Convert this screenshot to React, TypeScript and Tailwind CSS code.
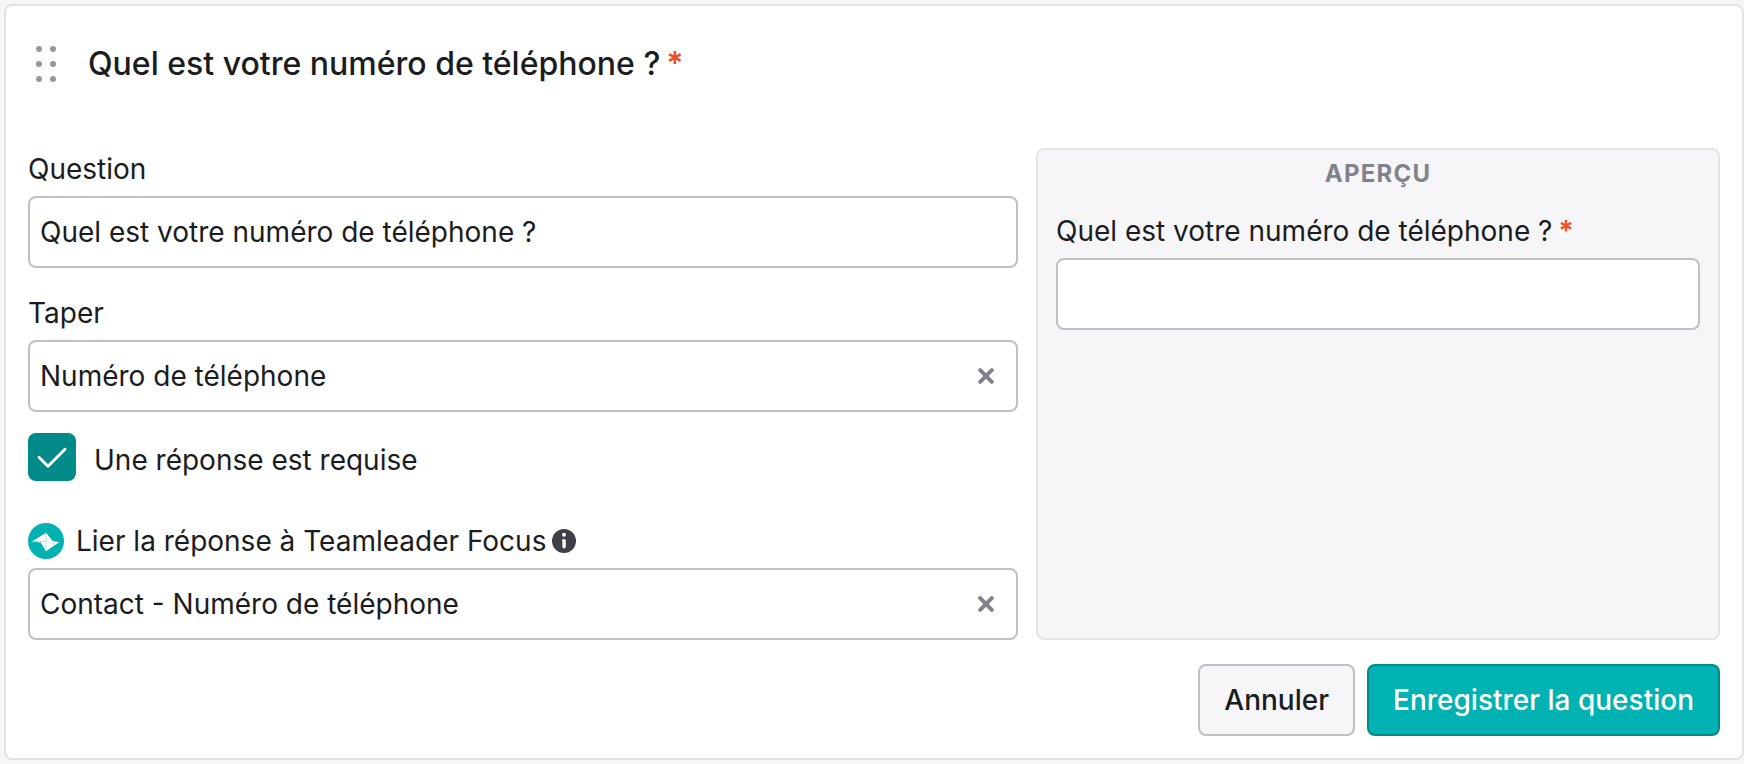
import { useState } from "react";

const fieldClass =
  "block h-[72px] w-full appearance-none rounded-lg border-2 border-[#c0c0c4] bg-white px-2.5 text-[28px] leading-9 text-[#1a1c20] outline-none focus:border-[#00b2b2]";

function DragHandle() {
  return (
    <svg width="20" height="36" viewBox="0 0 20 36" fill="#96969f" aria-hidden="true">
      {[3, 18, 33].map((y) => (
        <g key={y}>
          <circle cx="3" cy={y} r="3" />
          <circle cx="17" cy={y} r="3" />
        </g>
      ))}
    </svg>
  );
}

function FocusLogo() {
  return (
    <svg width="36" height="36" viewBox="0 0 36 36" className="shrink-0" aria-hidden="true">
      <circle cx="18" cy="18" r="18" fill="#00b2b2" />
      <path d="M18 9.8 24.8 18 31.6 19.2 26.2 22.6 18 28.2 12.7 19.6 4 18.4Z" fill="#fff" />
      <path d="M18 9.8v18.4M4 18.6H18M24.8 18 26.2 22.6" stroke="#8fdcdc" strokeWidth="0.8" fill="none" />
    </svg>
  );
}

function InfoIcon() {
  return (
    <svg width="24" height="24" viewBox="0 0 24 24" aria-hidden="true">
      <circle cx="12" cy="12" r="12" fill="#3f3f46" />
      <circle cx="12" cy="5.8" r="2" fill="#fff" />
      <path d="M10 11.2a1 1 0 0 1 1-1h1.8a1 1 0 0 1 1 1v6.6a1.7 1.7 0 0 1-3.4 0v-5.6a1 1 0 0 1-.4-1Z" fill="#fff" />
    </svg>
  );
}

function Required() {
  return <span className="ml-1.5 font-semibold text-[#f04e23]">*</span>;
}

function SelectField({ id, option, label }: { id: string; option: string; label: string }) {
  const [value, setValue] = useState(option);
  return (
    <div className="relative">
      <select id={id} value={value} onChange={(e) => setValue(e.target.value)} className={fieldClass}>
        <option value=""></option>
        <option value={option}>{option}</option>
      </select>
      <button
        type="button"
        aria-label={label}
        onClick={() => setValue("")}
        className="absolute inset-y-0 right-4 flex w-8 items-center justify-center"
      >
        <svg width="16" height="16" viewBox="0 0 16 16" aria-hidden="true">
          <path d="M2.2 2.2 13.8 13.8M13.8 2.2 2.2 13.8" stroke="#82828c" strokeWidth="4" strokeLinecap="round" />
        </svg>
      </button>
    </div>
  );
}

export default function App() {
  const [question, setQuestion] = useState("Quel est votre numéro de téléphone ?");
  const [required, setRequired] = useState(true);

  return (
    <main className="min-h-screen bg-[#f6f6f9] pt-1 pb-1 pl-1 font-['Inter','Liberation_Sans',sans-serif] text-[28px] leading-9 text-[#1a1c20]">
      <form
        onSubmit={(e) => e.preventDefault()}
        className="rounded-lg border-2 border-[#e4e4e6] bg-white px-[22px] pt-9 pb-[22px]"
      >
        <header className="flex items-center pl-2">
          <DragHandle />
          <h1 className="ml-8 text-[32px] leading-[44px] font-medium">
            {question}
            {required && <Required />}
          </h1>
        </header>

        <div className="mt-[62px] grid grid-cols-[55fr_38fr] gap-[18px]">
          <div>
            <div className="pt-[3px]">
              <label htmlFor="question" className="mb-[9px] block">
                Question
              </label>
              <input
                id="question"
                type="text"
                value={question}
                onChange={(e) => setQuestion(e.target.value)}
                className={fieldClass}
              />
            </div>

            <div className="mt-[27px]">
              <label htmlFor="type" className="mb-[9px] block">
                Taper
              </label>
              <SelectField id="type" option="Numéro de téléphone" label="Effacer le type" />
            </div>

            <label className="mt-[21px] flex items-center gap-[18px]">
              <span className="grid">
                <input
                  type="checkbox"
                  checked={required}
                  onChange={(e) => setRequired(e.target.checked)}
                  className="peer col-start-1 row-start-1 size-12 appearance-none rounded-lg border-2 border-[#c0c0c4] bg-white checked:border-[#008a8a] checked:bg-[#008a8a]"
                />
                <svg
                  width="48"
                  height="48"
                  viewBox="0 0 48 48"
                  className="pointer-events-none invisible col-start-1 row-start-1 peer-checked:visible"
                  aria-hidden="true"
                >
                  <path
                    d="M11 24.3 20 33.3 37 16.3"
                    fill="none"
                    stroke="#fff"
                    strokeWidth="3"
                    strokeLinecap="round"
                    strokeLinejoin="round"
                  />
                </svg>
              </span>
              <span className="pt-1.5">Une réponse est requise</span>
            </label>

            <div className="mt-[42px]">
              <div className="mb-[9px] flex items-center">
                <FocusLogo />
                <label htmlFor="focus-field" className="ml-3">
                  Lier la réponse à Teamleader Focus
                </label>
                <button type="button" aria-label="Informations" className="ml-1.5">
                  <InfoIcon />
                </button>
              </div>
              <SelectField id="focus-field" option="Contact - Numéro de téléphone" label="Effacer le champ lié" />
            </div>
          </div>

          <section className="rounded-lg border-2 border-[#e4e4e6] bg-[#f6f6f9] px-[18px] pt-1.5">
            <h2 className="text-center text-2xl leading-9 font-bold tracking-wider text-[#82828c] uppercase">Aperçu</h2>
            <label htmlFor="preview" className="mt-[21px] mb-[9px] block">
              {question}
              {required && <Required />}
            </label>
            <input id="preview" type="tel" className={fieldClass} />
          </section>
        </div>

        <footer className="mt-6 flex justify-end gap-3">
          <button
            type="button"
            className="h-[72px] rounded-lg border-2 border-[#c0c0c4] bg-[#f6f6f9] px-6 font-medium"
          >
            Annuler
          </button>
          <button
            type="submit"
            className="h-[72px] rounded-lg border-2 border-[#008a8a] bg-[#00b2b2] px-6 font-medium text-white"
          >
            Enregistrer la question
          </button>
        </footer>
      </form>
    </main>
  );
}
